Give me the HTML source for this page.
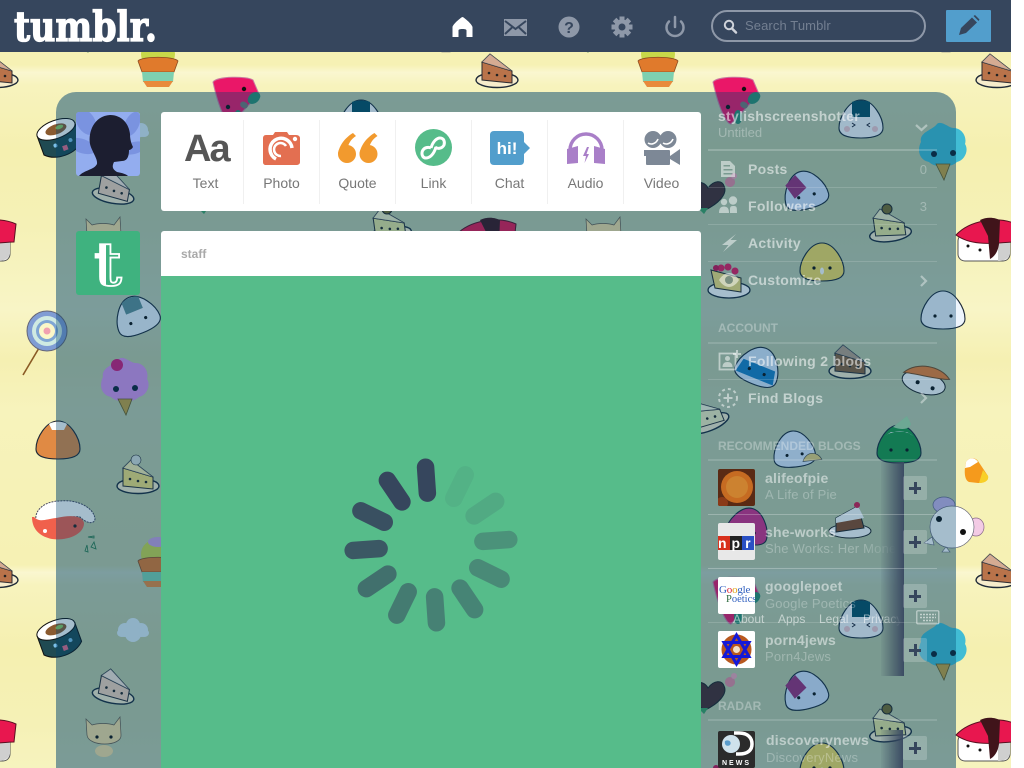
<!DOCTYPE html>
<html><head><meta charset="utf-8"><title>Tumblr</title>
<style>
html,body{margin:0;padding:0;background:#fff;overflow:hidden;width:1024px;height:768px}
#p{position:absolute;left:0;top:0;width:1011px;height:768px;overflow:hidden;font-family:"Liberation Sans",sans-serif}
#p>*{position:absolute}
.t{white-space:nowrap;line-height:20px;height:20px}
.lab{width:76px;text-align:center;top:173px;font-size:14px;color:#777}
.div{width:1px;top:120px;height:84px;background:#f0f0f0}
.nav{left:748px;font-size:14px;font-weight:bold;color:rgba(255,255,255,.55);letter-spacing:.3px}
.hd{left:718px;font-size:12px;font-weight:bold;color:rgba(255,255,255,.3)}
.ln{left:708px;width:229px;height:1px;background:rgba(255,255,255,.15)}
.nm{left:765px;font-size:14px;font-weight:bold;color:rgba(255,255,255,.5);letter-spacing:.2px}
.sb{left:765px;font-size:13px;color:rgba(255,255,255,.28);letter-spacing:.2px}
.cnt{left:880px;width:47px;text-align:right;font-size:13px;color:rgba(255,255,255,.3)}
.pl{left:903px;width:24px;height:24px;background:rgba(255,255,255,.2);border-radius:2px}
.pl:before{content:"";position:absolute;left:6px;top:10.5px;width:12px;height:3px;background:#36465d}
.pl:after{content:"";position:absolute;left:10.5px;top:6px;width:3px;height:12px;background:#36465d}
.av{left:718px;width:37px;height:37px;border-radius:2px;overflow:hidden}
.ft{top:609px;font-size:12px;color:rgba(255,255,255,.55)}
</style></head><body>
<div id="p">
<svg width="1011" height="768" style="left:0;top:0" xmlns="http://www.w3.org/2000/svg">
<defs>
<linearGradient id="g" x1="0" y1="0" x2="0" y2="1">
<stop offset="0" stop-color="#f6f2b6"/><stop offset=".13" stop-color="#f6f1b4"/><stop offset=".145" stop-color="#faf7d0"/><stop offset=".17" stop-color="#f7f3bd"/><stop offset=".3" stop-color="#f5f0b0"/><stop offset=".45" stop-color="#f5f1b6"/><stop offset=".62" stop-color="#f8f5c6"/><stop offset=".72" stop-color="#f5f0b2"/><stop offset=".82" stop-color="#f7f3bc"/><stop offset="1" stop-color="#f6f2b6"/>
</linearGradient>
<linearGradient id="tg" x1="0" y1="0" x2="1" y2="0"><stop offset=".42" stop-color="#fff"/><stop offset=".42" stop-color="#3fb27f"/></linearGradient>
<pattern id="t" width="500" height="500" patternUnits="userSpaceOnUse"><rect width="500" height="500" fill="url(#g)"/></pattern>
<path id="oni" d="M0,-19C12,-19 22,-2 22,9C22,17 12,19 0,19C-12,19 -22,17 -22,9C-22,-2 -12,-19 0,-19Z" fill="currentColor" stroke="#1e2a38" stroke-width="1.1"/>
<g id="eyes"><circle cx="-8" cy="6" r="1.6" fill="#111"/><circle cx="8" cy="6" r="1.6" fill="#111"/></g>
<g id="pie"><ellipse cx="0" cy="11" rx="21" ry="7.500" fill="#f6eccb" stroke="#1e2a38" stroke-width="1.400"/><path d="M-15,-7L-15,11L15,14L15,2Z" fill="currentColor" stroke="#2a2a30"/><path d="M-15,-7L-7,-15L15,2Z" fill="currentColor" stroke="#2a2a30" stroke-width=".9"/><path d="M-15,-7L-7,-15L15,2Z" fill="#fff" fill-opacity=".4"/><circle cx="-8" cy="4" r="1.300" fill="#222"/><circle cx="0" cy="6" r="1.300" fill="#222"/><circle cx="8" cy="7" r="1.300" fill="#222"/></g>
<g id="sushi"><rect x="-26" y="-6" width="52" height="27" rx="7" fill="#fff" stroke="#555"/><path d="M14,-8L26,-6L26,14C24,20 18,21 14,21Z" fill="#cfcfcf"/><path d="M-28,-5C-14,-20 14,-24 32,-16L30,2C16,2 -10,8 -28,-5Z" fill="#e8174f" stroke="#5a1020"/><path d="M-4,-20C4,-24 12,-22 16,-20L15,4C14,12 10,17 6,19L4,-4Z" fill="#40141a"/><circle cx="-16" cy="6" r="1.500" fill="#111"/><circle cx="-4" cy="10" r="1.500" fill="#111"/></g>
<g id="cot"><path d="M-22,-8C-24,-18 -10,-20 -6,-26C-2,-30 6,-22 10,-22C20,-22 24,-12 22,-6C26,0 22,10 14,12C8,18 -8,18 -14,12C-24,10 -26,0 -22,-8Z" fill="currentColor"/><path d="M-7,14L7,14L1,30Z" fill="#c6a03e" stroke="#6a5a20" stroke-width=".8"/><circle cx="-9" cy="4" r="3" fill="#123"/><circle cx="10" cy="3" r="3" fill="#123"/></g>
<g id="s">
<use href="#pie" x="497" y="69" color="#b9734a"/>
<g transform="translate(158,64)"><ellipse cx="0" cy="-10" rx="17" ry="15" fill="#c8d84a"/><ellipse cx="0" cy="-22" rx="10" ry="5" fill="#c9a0e0"/><path d="M-20,-3C-16,-8 16,-8 20,-3L16,8L-16,8Z" fill="#e07a2c" stroke="#8a4a20" stroke-width=".8"/><path d="M-16,8H16L15,18H-15Z" fill="#7ed0b0"/><path d="M-15,17H15L11,23H-11Z" fill="#e88a3c"/></g>
<g transform="translate(235,100)"><path d="M-22,-18C-18,-24 12,-24 18,-20L24,-6L-4,24C-8,24 -16,10 -22,-18Z" fill="#ea1768" stroke="#c97aa0" stroke-width="1"/><circle cx="9" cy="-11" r="2.200" fill="#111"/><circle cx="-7" cy="7" r="2.200" fill="#111"/><ellipse cx="19" cy="-2" rx="7" ry="5" transform="rotate(-40 19 -2)" fill="#2f8f70"/><rect x="5" y="2" width="8" height="6" rx="3" fill="#777" transform="rotate(30 9 5)"/><ellipse cx="3" cy="17" rx="4" ry="7" fill="#2f8f70"/></g>
<g transform="translate(361,119)"><use href="#oni" color="#f8f8fb"/><path d="M-9,-17C-5,-19 5,-19 9,-17L9,-2L-9,-2Z" fill="#0a4e63"/><circle cx="-14" cy="10" r="3" fill="#f3c9d0"/><circle cx="14" cy="10" r="3" fill="#f3c9d0"/><path d="M-9,4l3,2l-3,2M9,4l-3,2l3,2" stroke="#223" fill="none"/></g>
<g transform="translate(58,135) rotate(-20)"><path d="M-20,-6V14C-10,24 10,24 20,14V-6Z" fill="#1f4a52" stroke="#111"/><ellipse cx="0" cy="-6" rx="20" ry="9" fill="#fff" stroke="#111"/><ellipse cx="0" cy="-6" rx="11" ry="5" fill="#8a5a30"/><ellipse cx="4" cy="-7" rx="4" ry="2" fill="#8ecb60"/><circle cx="-6" cy="9" r="2" fill="#7cc0e8"/><circle cx="10" cy="9" r="2" fill="#7cc0e8"/><rect x="0" y="12" width="5" height="5" fill="#e86a8a"/></g>
<g transform="translate(133,130)" fill="#dcedf6"><circle cx="-8" cy="0" r="7"/><circle cx="0" cy="-5" r="7"/><circle cx="8" cy="0" r="7"/><circle cx="0" cy="4" r="8"/><ellipse cx="-11" cy="3" rx="5" ry="4"/><ellipse cx="11" cy="3" rx="5" ry="4"/></g>
<use href="#cot" x="443" y="150" color="#41bcd4"/>
<use href="#pie" x="115" y="185" color="#f3d3bb" transform="rotate(10 115 185)"/>
<g transform="translate(210,190)"><path d="M-5,20C-20,12 -24,0 -16,-6C-10,-10 -4,-6 -2,-2C4,-10 12,-10 14,-4C18,4 8,14 -5,20Z" fill="#4a2a2a" stroke="#222"/><circle cx="20" cy="-8" r="5" fill="#e88aa0"/><circle cx="24" cy="-14" r="3" fill="#f0a8b8"/><path d="M-12,18l6,6l4,-6z" fill="#40a060"/></g>
<g transform="translate(305,190) rotate(-14)"><use href="#oni" color="#d4e2fa"/><path d="M-18,-9L-6,-17L2,-2L-12,6Z" fill="#9a2c78"/><use href="#eyes"/></g>
<use href="#pie" x="389" y="223" color="#e6e49a" transform="rotate(-8 389 223)"/><circle cx="387" cy="209" r="5" fill="#7a6a28" stroke="#222"/>
<use href="#sushi" x="484" y="240"/>
<g transform="translate(104,237)"><path d="M-18,-18L-12,-12C-6,-14 4,-14 10,-12L16,-20L17,-2C18,10 -16,10 -17,-2Z" fill="#f6dca0" stroke="#6a5a4a" stroke-width=".7"/><circle cx="-7" cy="0" r="1.600" fill="#111"/><circle cx="7" cy="0" r="1.600" fill="#111"/><ellipse cx="0" cy="14" rx="9" ry="6" fill="#f6dca0"/></g>
<g transform="translate(322,262)"><use href="#oni" color="#f6dc60"/><use href="#eyes"/><ellipse cx="0" cy="9" rx="2" ry="3.500" fill="#fff"/></g>
<g transform="translate(229,280)"><ellipse cx="0" cy="10" rx="21" ry="8" fill="#fff" stroke="#1e2a38" stroke-width="1.300"/><path d="M-18,-10L12,-2L12,12L-14,8Z" fill="#f7e27a" stroke="#2a2a2a"/><circle cx="-8" cy="-12" r="3.500" fill="#e6185a"/><circle cx="-1" cy="-13" r="3.500" fill="#e6185a"/><circle cx="6" cy="-9" r="3.500" fill="#e6185a"/><circle cx="-13" cy="-12" r="3" fill="#c81050"/></g>
<g transform="translate(136,315) rotate(-22)"><use href="#oni" color="#ecf3fa"/><path d="M-9,-16C-5,-19 5,-19 9,-16L9,-4L-9,-4Z" fill="#5f8c94"/><use href="#eyes"/></g>
<g transform="translate(443,310)"><use href="#oni" color="#eef5fd"/><use href="#eyes"/></g>
<g transform="translate(47,331)"><path d="M-8,17L-24,44" stroke="#8a5a24" stroke-width="1.600"/><circle r="20" fill="#7f9cd4" stroke="#667"/><circle r="15" fill="#cfeae2"/><circle r="11" fill="#7fa6d4"/><circle r="8" fill="#fbf7c8"/><circle r="3.500" fill="#f0a0b0"/></g>
<g transform="translate(125,385)"><use href="#cot" color="#d995ec"/><circle cx="-8" cy="-20" r="6" fill="#d01878"/></g>
<g transform="translate(425,378) rotate(15)"><ellipse cx="0" cy="5" rx="22" ry="11" fill="#fff" stroke="#222"/><path d="M-22,0C-12,-14 12,-16 24,-5C16,-2 -8,-2 -22,0Z" fill="#f08030" stroke="#7a4a20"/><circle cx="-6" cy="6" r="2" fill="#111"/><circle cx="10" cy="8" r="2" fill="#111"/></g>
<g transform="translate(259,366) rotate(22)"><use href="#oni" color="#d8e8fd"/><path d="M-17,-1L17,-1L20,13L-20,13Z" fill="#1c7fc4"/><use href="#eyes"/></g>
<use href="#pie" x="350" y="360" color="#8a6038"/>
<use href="#pie" x="205" y="413" color="#f0eebe" transform="rotate(-22 205 413)"/>
<g transform="translate(58,440)"><use href="#oni" color="#e08a44"/><path d="M-9,-16C-5,-19 5,-19 9,-16L6,-10H-6Z" fill="#fff"/></g>
<use href="#pie" x="138" y="475" color="#f3e27a"/>
<circle cx="136" cy="460" r="5" fill="#d8dcd8" stroke="#333" stroke-width=".6"/>
<g transform="translate(294,449) rotate(-6) scale(.95)"><use href="#oni" color="#dde9fd"/><use href="#eyes"/><path d="M8,14C12,4 24,4 28,14Z" fill="#e9d17a" stroke="#444" stroke-width=".7"/></g>
<g transform="translate(399,444)"><use href="#oni" color="#1f9844"/><path d="M-6,-17L8,-28L12,-20C10,-14 2,-14 -6,-17Z" fill="#a8dfa8"/><path d="M-14,-8C-6,-14 8,-14 14,-8L8,-12L-8,-12Z" fill="#fff"/><use href="#eyes"/></g>
<g transform="translate(476,470)"><path d="M-10,-8C-7,-13 -1,-13 2,-9L12,6C13,11 8,13 2,13L-7,12C-12,10 -12,0 -10,-8Z" fill="#f59a1c"/><path d="M-10,-8C-7,-13 -1,-13 2,-8L-6,-3L-11,-2Z" fill="#fff"/><path d="M7,0L12,6C13,11 8,13 3,13Z" fill="#f8d028"/></g>
<g transform="translate(60,27)"><path d="M-24,-6C-26,-18 -14,-26 0,-26C16,-28 34,-20 35,-8C34,-2 26,-4 20,-10C10,-12 -10,-4 -24,-6Z" fill="#fff" stroke="#4a4a60" stroke-dasharray="2 1"/><path d="M-26,-10C-20,-4 -14,-8 -4,-9C10,-12 22,-12 24,-4C24,8 6,14 -8,12C-18,10 -28,4 -28,-10Z" fill="#f0604c"/><circle cx="-15" cy="4" r="2" fill="#fff"/><circle cx="15" cy="-1" r="1.600" fill="#222"/><path d="M28,10l6,-1v2zM34,15l2,7l-5,-2zM27,18l1,7l-3,-1z" fill="none" stroke="#2d7a4a" stroke-width=".8"/></g>
<g transform="translate(248,26) rotate(12) scale(.95)"><use href="#oni" color="#d42c88"/><use href="#eyes"/></g>
<g transform="translate(350,20)"><ellipse cx="0" cy="11" rx="21" ry="7" fill="#fff" stroke="#222"/><path d="M-14,-2L8,-14L14,8L-14,12Z" fill="#8a4a24" stroke="#222"/><path d="M-14,-2L8,-14L14,-2L-14,3Z" fill="#fff"/><circle cx="7" cy="-15" r="3" fill="#d8184a"/></g>
<g transform="translate(450,27)"><ellipse cx="-6" cy="-22" rx="11" ry="8" fill="#c9b4ea" stroke="#6a6a8a" stroke-width=".7"/><ellipse cx="26" cy="0" rx="8" ry="9" fill="#f3cbe5" stroke="#8a6a8a" stroke-width=".7"/><ellipse cx="2" cy="0" rx="22" ry="21" fill="#fff" stroke="#6a6a7a" stroke-width=".7"/><circle cx="-11" cy="-8" r="3" fill="#111"/><circle cx="13" cy="5" r="3" fill="#111"/><path d="M-18,10l-8,6l10,2zM-4,20l-4,5l8,0z" fill="#fff" stroke="#667" stroke-width=".6"/></g>
</g>
<g id="all"><use href="#s" x="-500" y="0"/><use href="#s" x="0" y="0"/><use href="#s" x="500" y="0"/><use href="#s" x="-500" y="500"/><use href="#s" x="0" y="500"/><use href="#s" x="500" y="500"/></g>
</defs>
<rect width="1011" height="768" fill="url(#t)"/>
<use href="#all"/>
</svg>
<div style="left:56px;top:92px;width:900px;height:676px;background:rgba(0,68,112,.5);border-radius:20px 20px 0 0"></div>
<svg width="900" height="676" style="left:56px;top:92px;border-radius:20px 20px 0 0"><use href="#all" x="-56" y="-92" opacity=".3"/></svg>

<div style="left:881px;top:462px;width:23px;height:214px;background:linear-gradient(90deg,rgba(54,70,93,.05),rgba(54,70,93,.55) 55%,#3b4b63)"></div>
<div style="left:881px;top:730px;width:22px;height:38px;background:linear-gradient(90deg,rgba(54,70,93,.05),rgba(54,70,93,.55) 55%,#3b4b63)"></div>

<div style="left:0;top:0;width:1011px;height:52px;background:#36465d"></div>
<svg width="1011" height="52" style="left:0;top:0">
<text x="14" y="41" font-family="'DejaVu Serif',serif" font-weight="bold" font-size="41" textLength="143" lengthAdjust="spacingAndGlyphs" fill="#fff" stroke="#fff" stroke-width="1.300">tumblr.</text>
<path d="M462.500 17C463.500 17 472 24 472.500 27V37H466.500V30.500C466.500 29.500 465.500 29 462.500 29C459.500 29 458.500 29.500 458.500 30.500V37H452.500V27C453 24 461.500 17 462.500 17Z" fill="#fff"/>
<path d="M504 19H527V36H504Z" fill="#8e98a8"/><path d="M505 21L515.500 29L526 21M505 34L512 27.500M526 34L519 27.500" stroke="#36465d" stroke-width="2" fill="none"/>
<circle cx="569" cy="27" r="10.500" fill="#8e98a8"/>
<text x="569" y="33" text-anchor="middle" font-family="'Liberation Sans',sans-serif" font-weight="bold" font-size="16" fill="#36465d">?</text>
<g transform="translate(622,27)" fill="#8e98a8"><circle r="7.500"/><rect x="-2.500" y="-10.500" width="5" height="21"/><rect x="-2.500" y="-10.500" width="5" height="21" transform="rotate(45)"/><rect x="-2.500" y="-10.500" width="5" height="21" transform="rotate(90)"/><rect x="-2.500" y="-10.500" width="5" height="21" transform="rotate(135)"/><circle r="3.500" fill="#36465d"/></g>
<path d="M669 21.500A8.500 8.500 0 1 0 681 21.500" fill="none" stroke="#8e98a8" stroke-width="2.500" stroke-linecap="round"/><path d="M675 17V27" stroke="#8e98a8" stroke-width="2.500" stroke-linecap="round"/>
<rect x="712" y="11" width="213" height="30" rx="15" fill="none" stroke="#8e98a8" stroke-width="2"/>
<circle cx="729" cy="25" r="4.200" fill="none" stroke="#cfd3da" stroke-width="2"/><path d="M732 28.500L736 32.500" stroke="#cfd3da" stroke-width="2.500" stroke-linecap="round"/>
<rect x="946" y="10" width="45" height="32" rx="1" fill="#529ecc"/>
<path d="M959 35L961 28L972 17.500L977 22.500L966 33Z" fill="#36465d"/><path d="M973.500 16L975 15L979.500 19.500L978.500 21Z" fill="#36465d"/>
</svg>
<div class="t" style="left:745px;top:16px;font-size:13px;color:#737f91;letter-spacing:.1px">Search Tumblr</div>

<div style="left:161px;top:112px;width:540px;height:99px;background:#fff;border-radius:3px"></div>
<div class="div" style="left:243px"></div><div class="div" style="left:319px"></div><div class="div" style="left:395px"></div><div class="div" style="left:471px"></div><div class="div" style="left:547px"></div><div class="div" style="left:623px"></div>
<div class="t" style="left:184px;top:128px;height:42px;line-height:42px;font-size:38px;font-weight:bold;color:#565656;letter-spacing:-2px">Aa</div>
<svg width="540" height="99" style="left:161px;top:112px" viewBox="161 112 540 99">
<path d="M266 135H273L275 132H287L289 135H296C298.500 135 300 136.500 300 138V162C300 164 298.500 165 296 165H266C264 165 263 164 263 162V138C263 136.500 264 135 266 135Z" fill="#e36f51"/>
<path d="M276 159A11 11 0 1 1 292 148" fill="none" stroke="#fff" stroke-width="3.500"/>
<path d="M281 156A6.500 6.500 0 1 1 286 146" fill="none" stroke="#fff" stroke-width="2.500"/>
<circle cx="295" cy="139" r="2.200" fill="#fff"/>
<g fill="#f29a2e"><circle cx="347" cy="154" r="9"/><path d="M353 133C346 137 339 145 338 154L347 150C348 144 351 139 356 136Z"/><circle cx="368.500" cy="154" r="9"/><path d="M374.500 133C367.500 137 360.500 145 359.500 154L368.500 150C369.500 144 372.500 139 377.500 136Z"/></g>
<circle cx="433.500" cy="147.500" r="18.500" fill="#56bc8a"/>
<g fill="none" stroke="#fff" stroke-width="3"><path d="M431 148C433 141 437 138 440 138C444 138 445 142 444 145C442 149 437 149 435 147"/><path d="M436 147C434 154 430 158 426 158C422 158 421 153 423 150C425 147 429 147 431 148"/></g>
<path d="M494 131H520C522.500 131 524 132.500 524 135V142L530 148L524 154V161C524 163.500 522.500 165 520 165H494C491.500 165 490 163.500 490 161V135C490 132.500 491.500 131 494 131Z" fill="#529ecc"/>
<text x="507" y="154" text-anchor="middle" font-family="'Liberation Sans',sans-serif" font-weight="bold" font-size="17" fill="#fff">hi!</text>
<g fill="#a97fc8"><path d="M570 150A16 16 0 0 1 602 150" fill="none" stroke="#a97fc8" stroke-width="3.500"/><path d="M567 149L578 146V163L567 164Z"/><path d="M605 149L594 146V163L605 164Z"/><path d="M587 147L583 156H586L584.500 163L589 154H586.500L589 147Z"/></g>
<g fill="#7d8896"><ellipse cx="653" cy="139.500" rx="8.500" ry="8.500"/><ellipse cx="668" cy="139.500" rx="8.500" ry="8.500"/><rect x="646" y="150" width="24" height="15" rx="1"/><rect x="644" y="150" width="4" height="6"/><path d="M670 156L680 149V165L670 159Z"/></g>
<path d="M648 143C651 145 656 144 658 139M663 143C666 145 671 144 673 139" stroke="#fff" stroke-width="1.600" fill="none"/>
</svg>
<div class="t lab" style="left:167.500px">Text</div>
<div class="t lab" style="left:243.500px">Photo</div>
<div class="t lab" style="left:319.500px">Quote</div>
<div class="t lab" style="left:395.500px">Link</div>
<div class="t lab" style="left:471.500px">Chat</div>
<div class="t lab" style="left:547.500px">Audio</div>
<div class="t lab" style="left:623.500px">Video</div>

<svg width="64" height="64" style="left:76px;top:112px;border-radius:3px">
<rect width="64" height="64" fill="#93adef"/>
<g fill="#7a93e0"><ellipse cx="10" cy="10" rx="9" ry="14" transform="rotate(-30 10 10)"/><ellipse cx="6" cy="34" rx="14" ry="7" transform="rotate(20 6 34)"/><ellipse cx="56" cy="12" rx="7" ry="13" transform="rotate(25 56 12)"/><ellipse cx="58" cy="36" rx="12" ry="6" transform="rotate(-15 58 36)"/></g>
<path d="M3 64C8 58 18 58 21 52C22 47 16 40 14 32C12 20 18 4 34 3C46 3 53 12 54 22C54 27 55 31 57 35C56 37 54 38 53 38C53 43 52 49 46 49L38 50C36 54 36 57 41 60C46 61 50 62 52 64Z" fill="#1c1e30"/>
</svg>
<div style="left:76px;top:231px;width:64px;height:64px;background:#3fb27f;border-radius:3px"></div>
<svg width="64" height="64" style="left:76px;top:231px">
<text x="32" y="54" text-anchor="middle" font-family="'DejaVu Serif',serif" font-weight="bold" font-size="60" fill="url(#tg)" stroke="#fff" stroke-width="1.800">t</text>
</svg>

<div style="left:161px;top:231px;width:540px;height:45px;background:#fff;border-radius:3px 3px 0 0"></div>
<div style="left:161px;top:276px;width:540px;height:492px;background:#56bc8a"></div>
<div class="t" style="left:181px;top:244px;font-size:12px;font-weight:bold;color:#a9a9a9">staff</div>
<svg width="200" height="200" style="left:331px;top:445px" viewBox="-100 -100 200 200">
<g stroke-width="17.500" stroke-linecap="round" transform="rotate(-4)">
<path d="M0 -78V-52" stroke="#36465d"/>
<path d="M0 -78V-52" stroke="#36465d" stroke-opacity=".08" transform="rotate(30)"/>
<path d="M0 -78V-52" stroke="#36465d" stroke-opacity=".15" transform="rotate(60)"/>
<path d="M0 -78V-52" stroke="#36465d" stroke-opacity=".35" transform="rotate(90)"/>
<path d="M0 -78V-52" stroke="#36465d" stroke-opacity=".42" transform="rotate(120)"/>
<path d="M0 -78V-52" stroke="#36465d" stroke-opacity=".47" transform="rotate(150)"/>
<path d="M0 -78V-52" stroke="#36465d" stroke-opacity=".5" transform="rotate(180)"/>
<path d="M0 -78V-52" stroke="#36465d" stroke-opacity=".55" transform="rotate(210)"/>
<path d="M0 -78V-52" stroke="#36465d" stroke-opacity=".65" transform="rotate(240)"/>
<path d="M0 -78V-52" stroke="#36465d" stroke-opacity=".85" transform="rotate(270)"/>
<path d="M0 -78V-52" stroke="#36465d" stroke-opacity=".92" transform="rotate(300)"/>
<path d="M0 -78V-52" stroke="#36465d" transform="rotate(330)"/>
</g></svg>

<div class="t" style="left:718px;top:106px;font-size:14px;font-weight:bold;color:rgba(255,255,255,.55);letter-spacing:.25px">stylishscreenshotter</div>
<div class="t" style="left:718px;top:123px;font-size:13px;color:rgba(255,255,255,.3)">Untitled</div>
<div class="ln" style="top:149px;height:2px;background:rgba(255,255,255,.2)"></div>
<div class="ln" style="top:187px"></div><div class="ln" style="top:224px"></div><div class="ln" style="top:261px"></div>
<div class="t nav" style="top:159px">Posts</div>
<div class="t nav" style="top:196px">Followers</div>
<div class="t nav" style="top:233px">Activity</div>
<div class="t nav" style="top:270px">Customize</div>
<div class="t cnt" style="top:160px">0</div>
<div class="t cnt" style="top:197px">3</div>
<div class="t hd" style="top:318px">ACCOUNT</div>
<div class="ln" style="top:342px;height:2px;background:rgba(255,255,255,.14)"></div>
<div class="ln" style="top:379px"></div>
<div class="t nav" style="top:351px">Following 2 blogs</div>
<div class="t nav" style="top:388px">Find Blogs</div>
<div class="t hd" style="top:436px">RECOMMENDED BLOGS</div>
<div class="ln" style="top:459px;height:2px;background:rgba(255,255,255,.14)"></div>
<div class="ln" style="top:514px;background:rgba(255,255,255,.25)"></div>
<div class="ln" style="top:568px;background:rgba(255,255,255,.25)"></div>
<div class="ln" style="top:622px"></div>
<div class="t hd" style="top:696px">RADAR</div>
<div class="ln" style="top:719px;height:2px;background:rgba(255,255,255,.14)"></div>

<svg width="311" height="310" style="left:700px;top:100px" viewBox="700 100 311 310" fill="rgba(255,255,255,.5)">
<path d="M916 125L921.500 130L927 125" fill="none" stroke="rgba(255,255,255,.4)" stroke-width="2.200"/>
<path d="M921 276L926 281L921 286" fill="none" stroke="rgba(255,255,255,.4)" stroke-width="2.200"/>
<path d="M921 393L926 398L921 403" fill="none" stroke="rgba(255,255,255,.4)" stroke-width="2.200"/>
<path d="M721 161H730L735 166V177H721Z M723.500 165V166.500H730V165Z M723.500 169V170.500H732.500V169Z M723.500 173V174.500H732.500V173Z" fill-rule="evenodd"/>
<circle cx="724" cy="202" r="3.200"/><path d="M719 213C719 208 721 206.500 724 206.500C727 206.500 729 208 729 213Z"/>
<circle cx="733" cy="200.500" r="4.200"/><path d="M730 213C730 208 729.500 206 733 206C737 206 737 207 737 213Z"/>
<path d="M736 234L722 245H728.500L723 252L737 240H730.500Z"/>
<path d="M719 280C722 275 726 273 729 273C732 273 736 275 739 280C736 285 732 287 729 287C726 287 722 285 719 280Z"/><circle cx="729" cy="280" r="4" fill="#7a8f80"/>
<rect x="719.500" y="353.500" width="16" height="16" fill="none" stroke="rgba(255,255,255,.5)" stroke-width="1.800"/>
<circle cx="727.500" cy="358.500" r="2.500"/><path d="M722.500 367C722.500 363.500 724.500 362 727.500 362C730.500 362 732.500 363.500 732.500 367Z"/>
<path d="M736 350H738V353H741V355H738V358H736V355H733V353H736Z"/>
<circle cx="728" cy="398" r="9" fill="none" stroke="rgba(255,255,255,.5)" stroke-width="2" stroke-dasharray="3 3"/>
<path d="M727 393.500H729V397H732.500V399H729V402.500H727V399H723.500V397H727Z"/>
</svg>

<svg class="av" style="top:469px" viewBox="0 0 37 37"><rect width="37" height="37" fill="#5a2a14"/><circle cx="19" cy="18" r="16" fill="#c66b22"/><circle cx="19" cy="18" r="11" fill="#cc8230"/><circle cx="4" cy="34" r="6" fill="#8a3a18"/></svg>
<div class="t nm" style="top:468px">alifeofpie</div><div class="t sb" style="top:485px">A Life of Pie</div>
<div class="pl" style="top:476px"></div>

<div class="av" style="top:523px;background:#e8e8e8"></div>
<div class="t" style="left:718px;top:536px;height:14px;line-height:14px;font-size:14px;font-weight:bold;color:#fff;width:36px;background:linear-gradient(90deg,#d8301c 0,#d8301c 33%,#222 33%,#222 66%,#2a50c4 66%);text-align:center;letter-spacing:5px">npr</div>
<div class="t nm" style="top:522px">she-works</div>
<div class="t sb" style="top:539px;width:131px;overflow:hidden;-webkit-mask-image:linear-gradient(90deg,#000 75%,transparent)">She Works: Her Money</div>
<div class="pl" style="top:530px"></div>

<div class="av" style="top:577px;background:#fff"></div>
<div class="t" style="left:719px;top:585px;height:11px;line-height:11px;font-size:11px;font-family:'Liberation Serif',serif;color:#2f5fbf;letter-spacing:-.2px">G<span style="color:#d23">o</span><span style="color:#e0a010">o</span>gle</div>
<div class="t" style="left:726px;top:594px;width:29px;overflow:hidden;height:11px;line-height:11px;font-size:10.500px;font-family:'Liberation Serif',serif;color:#2f6a3f">P<span style="color:#2f5fbf">oetics</span></div>
<div class="t nm" style="top:576px">googlepoet</div>
<div class="t sb" style="top:594px">Google Poetics</div>
<div class="pl" style="top:584px"></div>

<svg class="av" style="top:631px" viewBox="0 0 37 37"><rect width="37" height="37" fill="#fff"/><circle cx="18.500" cy="18.500" r="15" fill="#b8581e"/><path d="M18.500 4L31 25.500H6ZM18.500 33L6 11.500H31Z" fill="none" stroke="#1418d8" stroke-width="3"/><circle cx="18.500" cy="18.500" r="3.500" fill="#f2e0c8"/></svg>
<div class="t nm" style="top:630px">porn4jews</div><div class="t sb" style="top:647px">Porn4Jews</div>
<div class="pl" style="top:638px"></div>

<svg class="av" style="top:731px" viewBox="0 0 37 37"><rect width="37" height="37" fill="#2b2b2b"/><circle cx="13" cy="13" r="9" fill="#cfe2ec"/><path d="M7 10C11 8 14 11 12 14C9 16 6 14 7 10Z" fill="#5a9ccc"/><path d="M16 2H21C30 2 34 7 34 13C34 19 30 23 21 23H18" fill="none" stroke="#fff" stroke-width="3.500"/><text x="18.500" y="34" text-anchor="middle" font-family="'Liberation Sans',sans-serif" font-weight="bold" font-size="7" letter-spacing="2" fill="#fff">NEWS</text></svg>
<div class="t nm" style="left:766px;top:730px">discoverynews</div><div class="t sb" style="left:766px;top:748px">DiscoveryNews</div>
<div class="pl" style="top:736px"></div>

<div class="t ft" style="left:733px">About</div>
<div class="t ft" style="left:778px">Apps</div>
<div class="t ft" style="left:819px">Legal</div>
<div class="t ft" style="left:863px;width:38px;overflow:hidden;-webkit-mask-image:linear-gradient(90deg,#000 50%,transparent)">Privacy</div>
<svg width="24" height="16" style="left:916px;top:610px"><rect x=".8" y=".8" width="22" height="13" rx="1" fill="none" stroke="rgba(255,255,255,.55)" stroke-width="1.200"/><path d="M4 4.500H20M4 7.500H20M7 10.500H17" stroke="rgba(255,255,255,.55)" stroke-width="1.600" stroke-dasharray="2 1"/></svg>
</div>
</body></html>
